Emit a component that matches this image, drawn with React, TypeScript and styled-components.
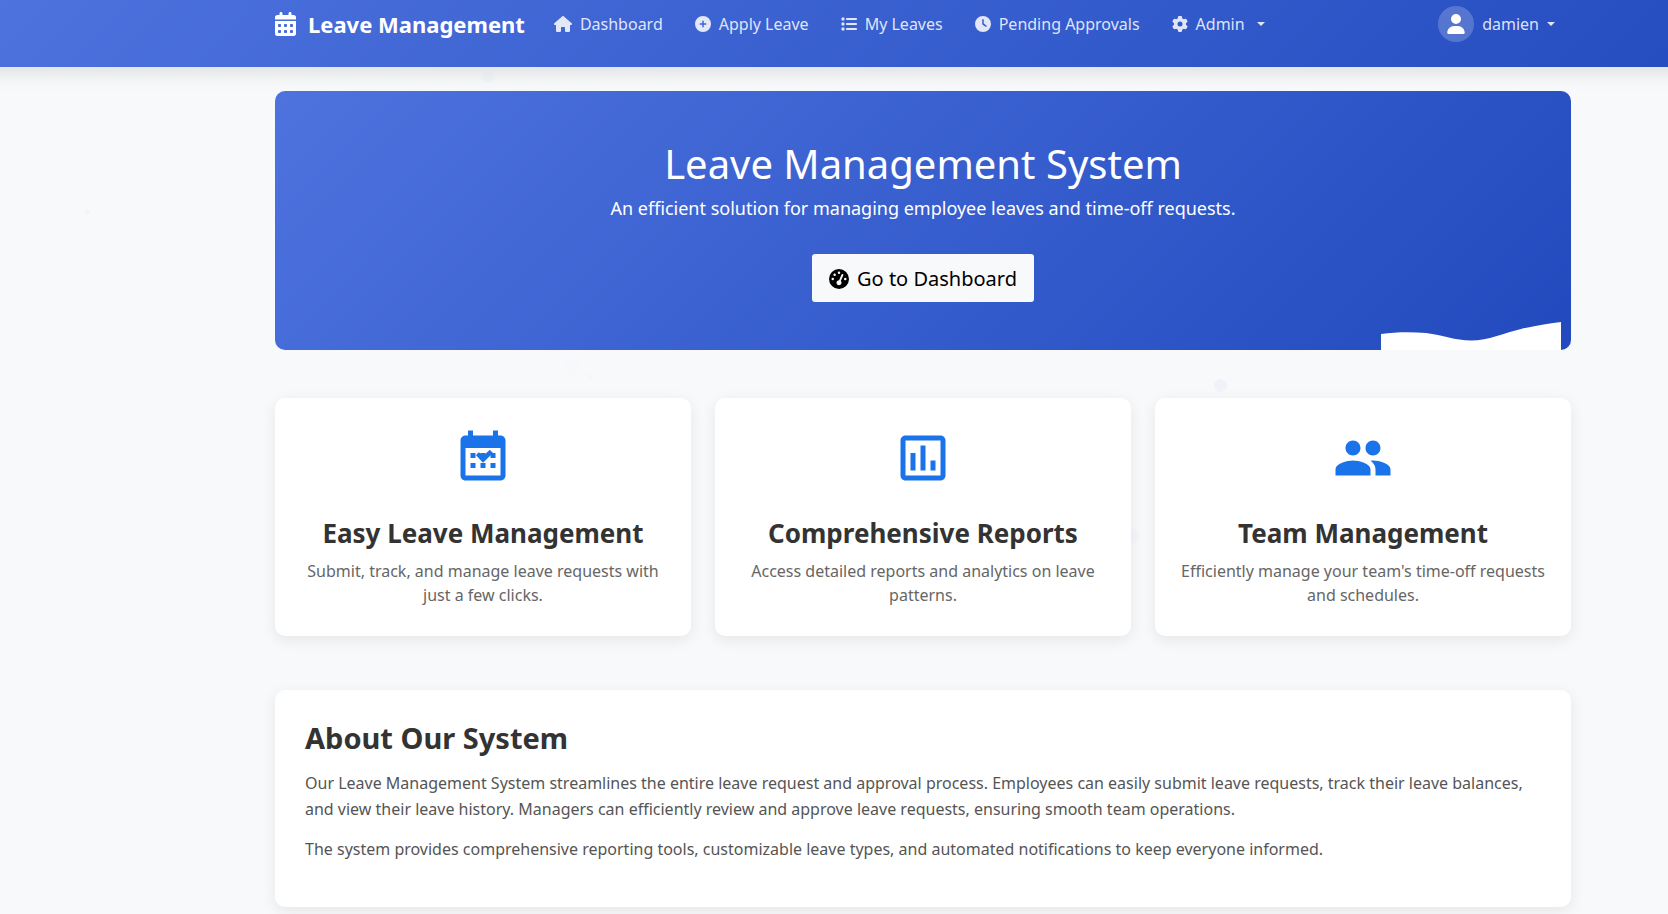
import React from "react";
import styled, { createGlobalStyle } from "styled-components";
import {
  FaCalendarDays,
  FaHouse,
  FaCirclePlus,
  FaList,
  FaClock,
  FaGear,
  FaUser,
  FaGaugeHigh,
} from "react-icons/fa6";

const GlobalStyle = createGlobalStyle`
  *, *::before, *::after { box-sizing: border-box; }
  body {
    margin: 0;
    background: #f8f9fb;
    font-family: "Noto Sans", "Liberation Sans", sans-serif;
    font-size: 16px;
    line-height: 24px;
    color: #333;
  }
  h1, h2, h3, p, ul { margin: 0; padding: 0; }
`;

const gradient = "linear-gradient(135deg, #4e73df 0%, #224abe 100%)";

const Page = styled.div`
  position: relative;
  min-height: 100vh;
  overflow: hidden;
`;

/* Runs past both window edges so that its shadow keeps an even depth. */
const Header = styled.header`
  position: relative;
  margin: 0 -24px;
  padding: 0 36px 19px 214px;
  background: ${gradient};
  background-size: calc(100% + 154px) 100%;
  box-shadow: 0 4px 20px rgba(0, 0, 0, 0.12);
`;

const Container = styled.div`
  width: 100%;
  max-width: 1296px;
  margin: 0 auto;
`;

const NavBar = styled(Container)`
  display: flex;
  align-items: center;
  height: 48px;
`;

const Brand = styled.a`
  display: flex;
  align-items: center;
  gap: 12px;
  margin-right: 13px;
  color: #fff;
  font-size: 22px;
  font-weight: 700;
  text-decoration: none;
  white-space: nowrap;

  svg { width: 21px; height: 24px; }
`;

const NavList = styled.ul`
  display: flex;
  flex: 1;
  list-style: none;
`;

const NavLink = styled.a<{ $iconWidth: number }>`
  display: flex;
  align-items: center;
  gap: 8px;
  padding: 8px 16px;
  color: rgba(255, 255, 255, 0.85);
  text-decoration: none;
  white-space: nowrap;

  svg { width: ${(p) => p.$iconWidth}px; height: 16px; }
`;

const MenuButton = styled.button`
  display: flex;
  align-items: center;
  gap: 8px;
  padding: 8px 16px;
  border: 0;
  background: none;
  color: rgba(255, 255, 255, 0.85);
  font: inherit;
  white-space: nowrap;
  cursor: pointer;
`;

const Caret = styled.span<{ $spaced?: boolean }>`
  margin-left: ${(p) => (p.$spaced ? 4 : 0)}px;
  border-top: 4px solid currentColor;
  border-left: 4px solid transparent;
  border-right: 4px solid transparent;
`;

const Avatar = styled.span`
  display: flex;
  align-items: center;
  justify-content: center;
  width: 36px;
  height: 36px;
  border-radius: 50%;
  background: rgba(255, 255, 255, 0.2);
  color: #fff;
  font-size: 20px;
`;

const Main = styled.main`
  position: relative;
  padding: 24px 12px 24px 190px;
`;

const Hero = styled.section`
  position: relative;
  display: flex;
  flex-direction: column;
  align-items: center;
  padding: 48px;
  margin-bottom: 48px;
  border-radius: 10px;
  background: ${gradient};
  color: #fff;
  text-align: center;
  overflow: hidden;
`;

const HeroTitle = styled.h1`
  margin-bottom: 6px;
  font-size: 40px;
  font-weight: 400;
  line-height: 50px;
`;

const HeroText = styled.p`
  margin-bottom: 32px;
  font-size: 18px;
  line-height: 27px;
`;

const HeroButton = styled.a`
  display: flex;
  align-items: center;
  gap: 8px;
  padding: 10px 17px 8px;
  border-radius: 3px;
  background: #f8f9fb;
  color: #000;
  font-size: 20px;
  line-height: 30px;
  text-decoration: none;
`;

const HeroWave = styled.svg`
  position: absolute;
  right: 10px;
  bottom: 0;
`;

const Features = styled.section`
  display: grid;
  grid-template-columns: repeat(3, 1fr);
  gap: 24px;
  margin-bottom: 54px;
`;

const Card = styled.article`
  padding: 30px 30px 31px;
  border-radius: 10px;
  background: #fff;
  box-shadow: 0 4px 15px rgba(0, 0, 0, 0.08);
`;

const FeatureCard = styled(Card)`
  display: flex;
  flex-direction: column;
  align-items: center;
  padding: 30px 24px 29px;
  text-align: center;
`;

const FeatureIcon = styled.svg`
  width: 60px;
  height: 60px;
  margin-bottom: 29px;
  fill: #1a73e8;
`;

const FeatureTitle = styled.h3`
  margin-bottom: 10px;
  font-size: 26px;
  font-weight: 700;
  line-height: 32px;
`;

const FeatureText = styled.p`
  color: #666;
`;

const AboutTitle = styled.h2`
  margin-bottom: 14px;
  font-size: 29px;
  font-weight: 700;
  line-height: 36px;
`;

const AboutText = styled.p`
  margin-bottom: 14px;
  color: #555;
  line-height: 26px;
`;

const Backdrop = styled.div`
  position: absolute;
  inset: 0;
  overflow: hidden;
  pointer-events: none;
`;

const Particle = styled.span<{ $x: number; $y: number; $size: number; $alpha: number }>`
  position: absolute;
  left: ${(p) => p.$x}px;
  top: ${(p) => p.$y}px;
  width: ${(p) => p.$size}px;
  height: ${(p) => p.$size}px;
  border-radius: 50%;
  background: rgba(78, 115, 223, ${(p) => p.$alpha});
`;

const particles = [
  { x: 482, y: 71, size: 12, alpha: 0.03 },
  { x: 85, y: 209, size: 5, alpha: 0.04 },
  { x: 1214, y: 379, size: 13, alpha: 0.05 },
  { x: 1126, y: 529, size: 14, alpha: 0.02 },
  { x: 586, y: 373, size: 7, alpha: 0.01 },
  { x: 563, y: 358, size: 18, alpha: 0.005 },
];

const links = [
  { label: "Dashboard", Icon: FaHouse, iconWidth: 18 },
  { label: "Apply Leave", Icon: FaCirclePlus, iconWidth: 16 },
  { label: "My Leaves", Icon: FaList, iconWidth: 16 },
  { label: "Pending Approvals", Icon: FaClock, iconWidth: 16 },
];

const features = [
  {
    title: "Easy Leave Management",
    text: "Submit, track, and manage leave requests with just a few clicks.",
    icon: (
      <>
        <path d="M19 3h-1V1h-2v2H8V1H6v2H5c-1.11 0-1.99.9-1.99 2L3 19c0 1.1.89 2 2 2h14c1.1 0 2-.9 2-2V5c0-1.1-.9-2-2-2zm0 16H5V8h14v11z" />
        <path d="M7 10h2v2H7zM11 10h2v2h-2zM15 10h2v2h-2zM7 14h2v2H7zM11 14h2v2h-2zM15 14h2v2h-2z" />
        <path d="M9.200 10.900L10.200 9.700L11.200 10.300L12.600 10.700L14.700 8.700L16 10L12 13.900Z" />
      </>
    ),
  },
  {
    title: "Comprehensive Reports",
    text: "Access detailed reports and analytics on leave patterns.",
    icon: (
      <path d="M19 3H5c-1.1 0-2 .9-2 2v14c0 1.1.9 2 2 2h14c1.1 0 2-.9 2-2V5c0-1.1-.9-2-2-2zm0 16H5V5h14v14zM7 10h2v7H7zM11 7h2v10h-2zM15 13h2v4h-2z" />
    ),
  },
  {
    title: "Team Management",
    text: "Efficiently manage your team's time-off requests and schedules.",
    icon: (
      <path d="M16 11c1.66 0 2.99-1.34 2.99-3S17.66 5 16 5c-1.66 0-3 1.34-3 3s1.34 3 3 3zm-8 0c1.66 0 2.99-1.34 2.99-3S9.66 5 8 5C6.34 5 5 6.34 5 8s1.34 3 3 3zm0 2c-2.33 0-7 1.17-7 3.5V19h14v-2.500c0-2.330-4.670-3.500-7-3.500zm8 0c-.29 0-.62.02-.97.05 1.160.84 1.970 1.970 1.970 3.450V19h6v-2.500c0-2.330-4.670-3.500-7-3.500z" />
    ),
  },
];

export default function App() {
  return (
    <Page>
      <GlobalStyle />
      <Header>
        <NavBar as="nav">
          <Brand href="#">
            <FaCalendarDays />
            Leave Management
          </Brand>
          <NavList>
            {links.map(({ label, Icon, iconWidth }) => (
              <li key={label}>
                <NavLink href="#" $iconWidth={iconWidth}>
                  <Icon />
                  {label}
                </NavLink>
              </li>
            ))}
            <li>
              <MenuButton type="button">
                <FaGear />
                Admin
                <Caret $spaced />
              </MenuButton>
            </li>
          </NavList>
          <MenuButton type="button">
            <Avatar>
              <FaUser />
            </Avatar>
            damien
            <Caret />
          </MenuButton>
        </NavBar>
      </Header>
      <Backdrop aria-hidden="true">
        {particles.map((p) => (
          <Particle key={p.x} $x={p.x} $y={p.y} $size={p.size} $alpha={p.alpha} />
        ))}
      </Backdrop>
      <Main>
        <Container>
          <Hero>
            <HeroTitle>Leave Management System</HeroTitle>
            <HeroText>An efficient solution for managing employee leaves and time-off requests.</HeroText>
            <HeroButton href="#">
              <FaGaugeHigh />
              Go to Dashboard
            </HeroButton>
            <HeroWave width="180" height="28" viewBox="0 0 180 28" aria-hidden="true">
              <path fill="#fff" d="M0 12C15 10 30 10 45 11C62 13 74 18.500 90 18.500C108 18.500 122 11 140 7C153 4 166 1.500 180 0V28H0Z" />
            </HeroWave>
          </Hero>
          <Features>
            {features.map((f) => (
              <FeatureCard key={f.title}>
                <FeatureIcon viewBox="0 0 24 24" aria-hidden="true">
                  {f.icon}
                </FeatureIcon>
                <FeatureTitle>{f.title}</FeatureTitle>
                <FeatureText>{f.text}</FeatureText>
              </FeatureCard>
            ))}
          </Features>
          <Card as="section">
            <AboutTitle>About Our System</AboutTitle>
            <AboutText>
              Our Leave Management System streamlines the entire leave request and approval process. Employees can
              easily submit leave requests, track their leave balances, and view their leave history. Managers can
              efficiently review and approve leave requests, ensuring smooth team operations.
            </AboutText>
            <AboutText>
              The system provides comprehensive reporting tools, customizable leave types, and automated notifications
              to keep everyone informed.
            </AboutText>
          </Card>
        </Container>
      </Main>
    </Page>
  );
}
